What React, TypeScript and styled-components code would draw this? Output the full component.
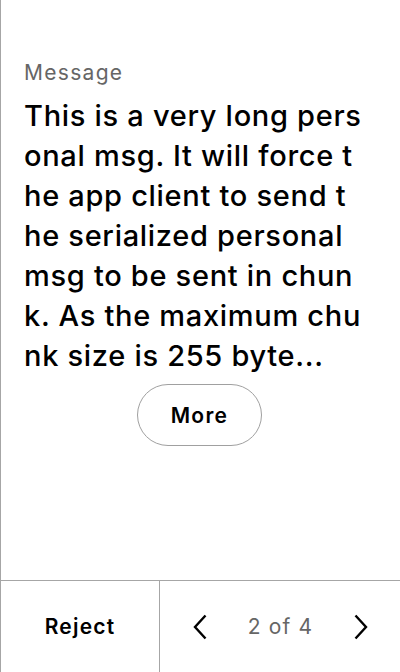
import React from "react";
import styled, { createGlobalStyle } from "styled-components";

const Global = createGlobalStyle`
  html, body { margin: 0; padding: 0; background: #fff; }
  body { font-family: Inter, "Noto Sans", sans-serif; }
  * { box-sizing: border-box; }
`;

const Screen = styled.div`
  width: 400px;
  height: 672px;
  display: flex;
  flex-direction: column;
  border-left: 1px solid #a6a6a6;
  background: #fff;
  color: #000;
`;

const Content = styled.div`
  flex: 1;
  display: flex;
  flex-direction: column;
  padding: 58px 10px 0 23px;
`;

const Label = styled.div`
  font-size: 21px;
  line-height: 30px;
  letter-spacing: 1.3px;
  color: #666;
`;

const Body = styled.div`
  margin-top: 8px;
  display: flex;
  flex-direction: column;
`;

const Line = styled.div`
  font-size: 29px;
  line-height: 40px;
  font-weight: 500;
  letter-spacing: 0.7px;
  white-space: pre;
`;

const MoreWrap = styled.div`
  display: flex;
  justify-content: center;
  margin-top: 8px;
  padding-right: 15px;
`;

const MoreButton = styled.button`
  width: 125px;
  height: 62px;
  border: 1px solid #a0a0a0;
  border-radius: 31px;
  background: #fff;
  font-family: Inter, sans-serif;
  font-size: 21px;
  font-weight: 600;
  letter-spacing: 1.3px;
  color: #000;
  padding: 0;
`;

const Footer = styled.div`
  height: 92px;
  border-top: 1px solid #a6a6a6;
  display: flex;
`;

const RejectCell = styled.div`
  width: 159px;
  border-right: 1px solid #a6a6a6;
  display: flex;
  align-items: center;
  justify-content: center;
  font-size: 21px;
  font-weight: 600;
  letter-spacing: 1.2px;
`;

const Nav = styled.div`
  flex: 1;
  display: flex;
  align-items: center;
  justify-content: space-between;
  padding: 0 32px 0 33px;
`;

const Pager = styled.div`
  font-size: 21px;
  letter-spacing: 1.2px;
  color: #666;
`;

const Chevron = ({ dir }: { dir: "left" | "right" }) => (
  <svg width="14" height="26" viewBox="0 0 14 26" fill="none">
    <path
      d={dir === "left" ? "M12.5 1.5 L2 13 L12.5 24.5" : "M1.5 1.5 L12 13 L1.5 24.5"}
      stroke="#000"
      strokeWidth="2.4"
    />
  </svg>
);

const lines = [
  "This is a very long pers",
  "onal msg. It will force t",
  "he app client to send t",
  "he serialized personal",
  "msg to be sent in chun",
  "k. As the maximum chu",
  "nk size is 255 byte...",
];

export default function App() {
  return (
    <>
      <Global />
      <Screen>
        <Content>
          <Label>Message</Label>
          <Body>
            {lines.map((l, i) => (
              <Line key={i}>{l}</Line>
            ))}
          </Body>
          <MoreWrap>
            <MoreButton>More</MoreButton>
          </MoreWrap>
        </Content>
        <Footer>
          <RejectCell>Reject</RejectCell>
          <Nav>
            <Chevron dir="left" />
            <Pager>2 of 4</Pager>
            <Chevron dir="right" />
          </Nav>
        </Footer>
      </Screen>
    </>
  );
}
